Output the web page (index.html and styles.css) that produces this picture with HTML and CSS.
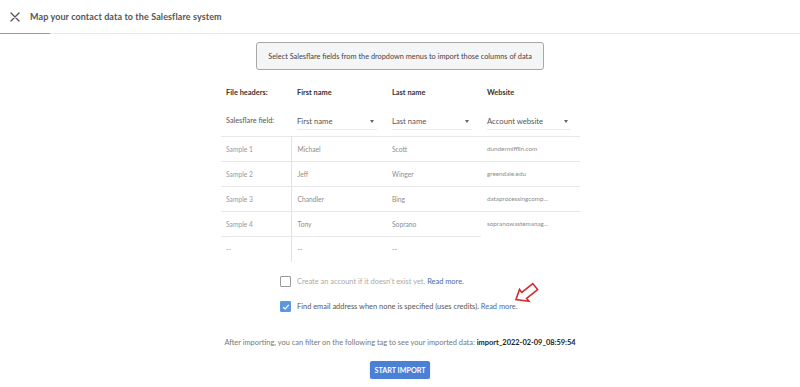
FILE: index.html
```html
<!DOCTYPE html>
<html>
<head>
<meta charset="utf-8">
<link rel="stylesheet" href="styles.css">
</head>
<body>
<header class="topbar">
  <svg class="close" width="10" height="10" viewBox="0 0 10 10"><path d="M1 1L9 9M9 1L1 9" stroke="#555" stroke-width="1.3" stroke-linecap="round"/></svg>
  <span class="title">Map your contact data to the Salesflare system</span>
</header>
<div class="rule"><span class="rule-active"></span><span class="rule-rest"></span></div>

<main class="main">
  <div class="info">Select Salesflare fields from the dropdown menus to import those columns of data</div>

  <table class="map">
    <colgroup><col class="c0"><col class="c1"><col class="c2"><col class="c3"></colgroup>
    <tr class="head">
      <th>File headers:</th><th>First name</th><th>Last name</th><th>Website</th>
    </tr>
    <tr class="fields">
      <td class="lab">Salesflare field:</td>
      <td><div class="select"><span>First name</span><i class="caret"></i></div></td>
      <td><div class="select"><span>Last name</span><i class="caret"></i></div></td>
      <td><div class="select"><span>Account website</span><i class="caret"></i></div></td>
    </tr>
    <tr class="row">
      <td>Sample 1</td><td>Michael</td><td>Scott</td><td>dundermifflin.com</td>
    </tr>
    <tr class="row">
      <td>Sample 2</td><td>Jeff</td><td>Winger</td><td>greendale.edu</td>
    </tr>
    <tr class="row">
      <td>Sample 3</td><td>Chandler</td><td>Bing</td><td>dataprocessingcomp...</td>
    </tr>
    <tr class="row">
      <td>Sample 4</td><td>Tony</td><td>Soprano</td><td>sopranowastemanag...</td>
    </tr>
    <tr class="row last">
      <td>--</td><td>--</td><td>--</td><td class="empty"></td>
    </tr>
  </table>

  <div class="options">
    <label class="opt off"><span class="box"></span><span>Create an account if it doesn't exist yet. <a class="link">Read more.</a></span></label>
    <label class="opt on"><span class="box checked"><svg width="8" height="8" viewBox="0 0 8 8"><path d="M1.2 4.2L3.2 6L6.8 1.8" fill="none" stroke="#fff" stroke-width="1.2"/></svg></span><span class="txt">Find email address when none is specified (uses credits). <a class="link">Read more.</a>
      <svg class="arrow" width="28" height="22" viewBox="0 0 28 22"><path d="M3 18.5L6.5 8.5L8.8 11.4L19.8 2.6L24.6 8.6L13.6 17.4L15.9 20.3Z" fill="#fff" stroke="#d42a2a" stroke-width="1.6" stroke-linejoin="miter"/></svg></span></label>
  </div>

  <p class="after">After importing, you can filter on the following tag to see your imported data: <b>import_2022-02-09_08:59:54</b></p>

  <button class="start">START IMPORT</button>
</main>
</body>
</html>
```
FILE: styles.css
```css
* { box-sizing: border-box; }
body { margin: 0; font-family: Lato, "Noto Sans", sans-serif; color: #555; background: #fff; }
.topbar { height: 33px; display: flex; align-items: center; padding-left: 10px; gap: 10px; }
.close { display: block; }
.title { font-size: 9px; font-weight: 700; color: #555; letter-spacing: 0.1px; }
.rule { display: flex; height: 1px; }
.rule-active { width: 50px; background: #9a9a9a; }
.rule-rest { flex: 1; background: #e8e8e8; }
.main { display: flex; flex-direction: column; align-items: center; }
.info { margin-top: 8px; width: 288px; height: 28px; display: flex; align-items: center; justify-content: center; border: 1px solid #a8a8a8; border-radius: 3px; background: #f4f5f7; font-size: 7.35px; color: #444; }
.map { margin-top: 8px; border-collapse: collapse; width: 359px; table-layout: fixed; font-size: 6.7px; margin-left: 1px; }
.c0 { width: 70px; } .c1 { width: 95px; } .c2 { width: 95px; } .c3 { width: 99px; }
.map th { text-align: left; font-size: 7.4px; font-weight: 700; color: #333; height: 28px; padding: 0 0 0 6px; }
.map th:first-child { padding-left: 5px; }
.fields td { height: 30px; padding: 0 9px 0 6px; vertical-align: middle; }
.fields td.lab { font-size: 7.3px; color: #555; padding-left: 5px; }
.select { display: flex; align-items: center; justify-content: space-between; height: 17px; border-bottom: 1px solid #ececec; font-size: 7.7px; color: #555; padding-right: 3px; margin-top: 2px; }
.caret { width: 0; height: 0; border-left: 2.5px solid transparent; border-right: 2.5px solid transparent; border-top: 3px solid #666; }
.row td { height: 25px; border-top: 1px solid #e8e8e8; padding: 0 0 0 6px; color: #8d8d8d; vertical-align: middle; }
.row td:first-child { padding-left: 5px; color: #999; border-right: 1px solid #e3e3e3; }
.row td:nth-child(4) { font-size: 6.3px; }
.row.last td { height: 26px; }
.row.last td.empty { border-top: none; }
.options { margin-top: 14px; display: flex; flex-direction: column; gap: 14px; align-self: flex-start; padding-left: 280px; }
.opt { display: flex; align-items: center; gap: 6px; font-size: 7.45px; }
.opt.off { color: #aaa; }
.opt.on { color: #555; }
.box { width: 11px; height: 11px; border: 1px solid #999; border-radius: 1px; display: flex; align-items: center; justify-content: center; }
.box.checked { background: #5b99dc; border-color: #5b99dc; }
.link { color: #4a6a9e; }
.txt { position: relative; }
.arrow { position: absolute; left: 216px; top: -21px; }
.after { margin: 26px 0 0 0; font-size: 7.45px; color: #777; }
.after b { color: #222; font-weight: 700; }
.start { margin-top: 14px; width: 60px; height: 18px; border: none; border-radius: 2px; background: #4a80d6; color: #fff; font-family: Lato, sans-serif; font-size: 7.2px; font-weight: 700; padding: 0; box-shadow: 0 1px 2px rgba(0,0,0,0.2); }
```
